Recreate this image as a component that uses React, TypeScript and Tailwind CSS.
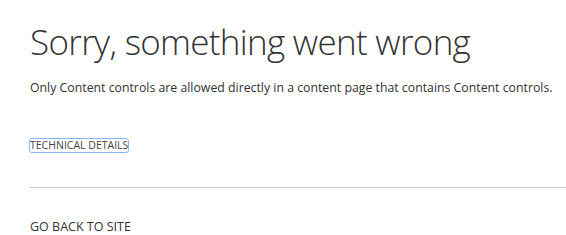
import React from 'react';

export default function App() {
    return (
        <div className="w-[566px] h-[235px] overflow-hidden bg-white pl-[30px] text-[#333]" style={{ fontFamily: '"Open Sans", "Liberation Sans", sans-serif' }}>
            <h1 className="pt-[19px] text-[35px] font-light leading-[46px] tracking-[-0.7px] whitespace-nowrap">Sorry, something went wrong</h1>
            <p className="mt-[14px] text-[12.3px] leading-[18px] whitespace-nowrap">Only Content controls are allowed directly in a content page that contains Content controls.</p>
            <div className="mt-[40px] h-[16px] flex items-center">
                <a href="#" className="inline-block text-[10.5px] leading-[13px] uppercase text-[#444] outline outline-[1.5px] outline-[#8ab4f8] rounded-[2px]">Technical Details</a>
            </div>
            <hr className="mt-[34px] border-0 border-t border-[#c8c8c8]" />
            <a href="#" className="block mt-[30px] text-[12.5px] leading-[18px] uppercase text-[#333]">Go back to site</a>
        </div>
    );
}
